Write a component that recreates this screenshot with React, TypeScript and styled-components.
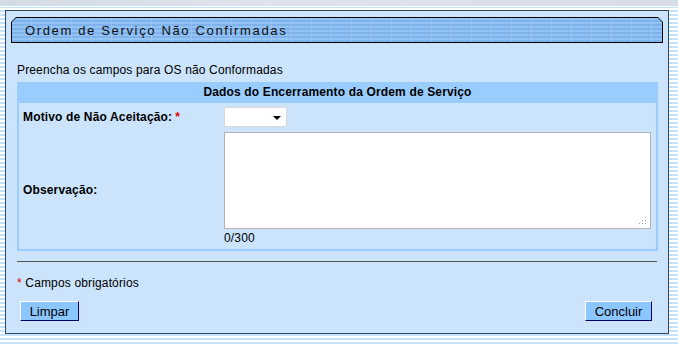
import styled, { createGlobalStyle } from 'styled-components';

const GlobalStyle = createGlobalStyle`
  html, body {
    margin: 0;
    padding: 0;
  }
  body {
    font-family: "Liberation Sans", Arial, sans-serif;
    font-size: 12px;
    letter-spacing: 0.15px;
    color: #000;
  }
`;

const Page = styled.div`
  width: 678px;
  height: 346px;
  overflow: hidden;
  background: repeating-linear-gradient(
    to bottom,
    #ffffff 0 2px,
    #c6e2f8 2px 4px
  );
`;

const TopStrip = styled.div`
  height: 6px;
  background: linear-gradient(to right, #d3dbe3, #dde4ec 40%, #d6dde5);
  border-bottom: 1px solid #ffffff;
`;

const Panel = styled.div`
  margin: 3px 0 0 5px;
  width: 664px;
  height: 324px;
  border: 1px solid #2f4860;
  background: #cbe4fc;
  padding: 6px 5px 0 5px;
  box-sizing: border-box;
  display: flex;
  flex-direction: column;
`;

const TitleFrame = styled.div`
  height: 26px;
  background: #000;
  padding: 1px;
  box-sizing: border-box;
  clip-path: polygon(5px 0, calc(100% - 5px) 0, 100% 5px, 100% 100%, 0 100%, 0 5px);
`;

const TitleBar = styled.div`
  height: 100%;
  display: flex;
  align-items: center;
  padding-left: 13px;
  font-size: 13px;
  letter-spacing: 1.65px;
  color: #111;
  background:
    repeating-linear-gradient(to right, transparent 0 19px, rgba(170, 205, 240, 0.5) 19px 20px),
    repeating-linear-gradient(to bottom, #92c3f5 0 2px, #7fb2ea 2px 4px);
  clip-path: polygon(4px 0, calc(100% - 4px) 0, 100% 4px, 100% 100%, 0 100%, 0 4px);
`;

const Content = styled.div`
  padding: 0 5px 0 6px;
  display: flex;
  flex-direction: column;
`;

const Intro = styled.div`
  margin-top: 20px;
  height: 14px;
  line-height: 14px;
`;

const FormTable = styled.div`
  margin-top: 5px;
  border: 2px solid #99ccff;
  border-top: 0;
  display: grid;
  grid-template-columns: 205px 1fr;
`;

const HeaderCell = styled.div`
  grid-column: 1 / -1;
  background: #99ccff;
  height: 21px;
  line-height: 21px;
  text-align: center;
  font-weight: bold;
`;

const Label = styled.div<{ $tall?: boolean }>`
  padding-left: 4px;
  font-weight: bold;
  display: flex;
  align-items: center;
  height: ${({ $tall }) => ($tall ? '118px' : '28px')};
`;

const Required = styled.span<{ $plain?: boolean }>`
  color: #e00000;
  margin-left: ${({ $plain }) => ($plain ? '0' : '3px')};
  font-weight: ${({ $plain }) => ($plain ? 'normal' : 'bold')};
`;

const Field = styled.div<{ $tall?: boolean }>`
  display: flex;
  flex-direction: column;
  justify-content: ${({ $tall }) => ($tall ? 'flex-start' : 'center')};
  height: ${({ $tall }) => ($tall ? '118px' : '28px')};
  padding-top: ${({ $tall }) => ($tall ? '1px' : '0')};
  box-sizing: border-box;
`;

const SelectWrap = styled.div`
  position: relative;
  width: 63px;
  height: 20px;

  &::after {
    content: '';
    position: absolute;
    right: 6px;
    top: 9px;
    border-left: 4px solid transparent;
    border-right: 4px solid transparent;
    border-top: 4px solid #000;
    pointer-events: none;
  }
`;

const Select = styled.select`
  appearance: none;
  width: 100%;
  height: 100%;
  margin: 0;
  border: 1px solid #d8d8d8;
  border-radius: 2px;
  background: #fff;
  font: inherit;
`;

const TextAreaWrap = styled.div`
  position: relative;
  width: 427px;
  height: 97px;

  &::after {
    content: '';
    position: absolute;
    right: 5px;
    bottom: 5px;
    width: 1px;
    height: 1px;
    background: #a0a0a0;
    box-shadow:
      -3px 0 #a0a0a0, -6px 0 #a0a0a0,
      0 -3px #a0a0a0, -3px -3px #a0a0a0,
      0 -6px #a0a0a0;
    pointer-events: none;
  }
`;

const TextArea = styled.textarea`
  width: 100%;
  height: 100%;
  margin: 0;
  border: 1px solid #b4b4b4;
  background: #fff;
  box-sizing: border-box;
  font: inherit;
  resize: none;
  display: block;
`;

const Counter = styled.div`
  margin-top: 2px;
  height: 14px;
  line-height: 14px;
`;

const Divider = styled.hr`
  margin: 10px 1px 0 0;
  border: 0;
  border-top: 1px solid #555;
  height: 0;
`;

const Note = styled.div`
  margin-top: 14px;
  height: 14px;
  line-height: 14px;
`;

const Actions = styled.div`
  margin-top: 11px;
  display: flex;
  justify-content: space-between;
  padding: 0 6px 0 3px;
`;

const Button = styled.button<{ $width: number }>`
  width: ${({ $width }) => $width}px;
  height: 20px;
  padding: 0;
  background: #8cc6ff;
  border-style: solid;
  border-width: 1px;
  border-color: #ffffff #000066 #000066 #ffffff;
  font-family: "Liberation Sans", Arial, sans-serif;
  font-size: 13px;
  color: #000;
  cursor: pointer;
`;

const App = () => {
  return (
    <Page>
      <GlobalStyle />
      <TopStrip />
      <Panel>
        <TitleFrame>
          <TitleBar>Ordem de Serviço Não Confirmadas</TitleBar>
        </TitleFrame>
        <Content>
          <Intro>Preencha os campos para OS não Conformadas</Intro>
          <FormTable>
            <HeaderCell>Dados do Encerramento da Ordem de Serviço</HeaderCell>
            <Label>
              Motivo de Não Aceitação:<Required>*</Required>
            </Label>
            <Field>
              <SelectWrap>
                <Select defaultValue="">
                  <option value=""></option>
                </Select>
              </SelectWrap>
            </Field>
            <Label $tall>Observação:</Label>
            <Field $tall>
              <TextAreaWrap>
                <TextArea />
              </TextAreaWrap>
              <Counter>0/300</Counter>
            </Field>
          </FormTable>
          <Divider />
          <Note>
            <Required $plain>*</Required> Campos obrigatórios
          </Note>
          <Actions>
            <Button $width={59}>Limpar</Button>
            <Button $width={67}>Concluir</Button>
          </Actions>
        </Content>
      </Panel>
    </Page>
  );
};

export default App;
